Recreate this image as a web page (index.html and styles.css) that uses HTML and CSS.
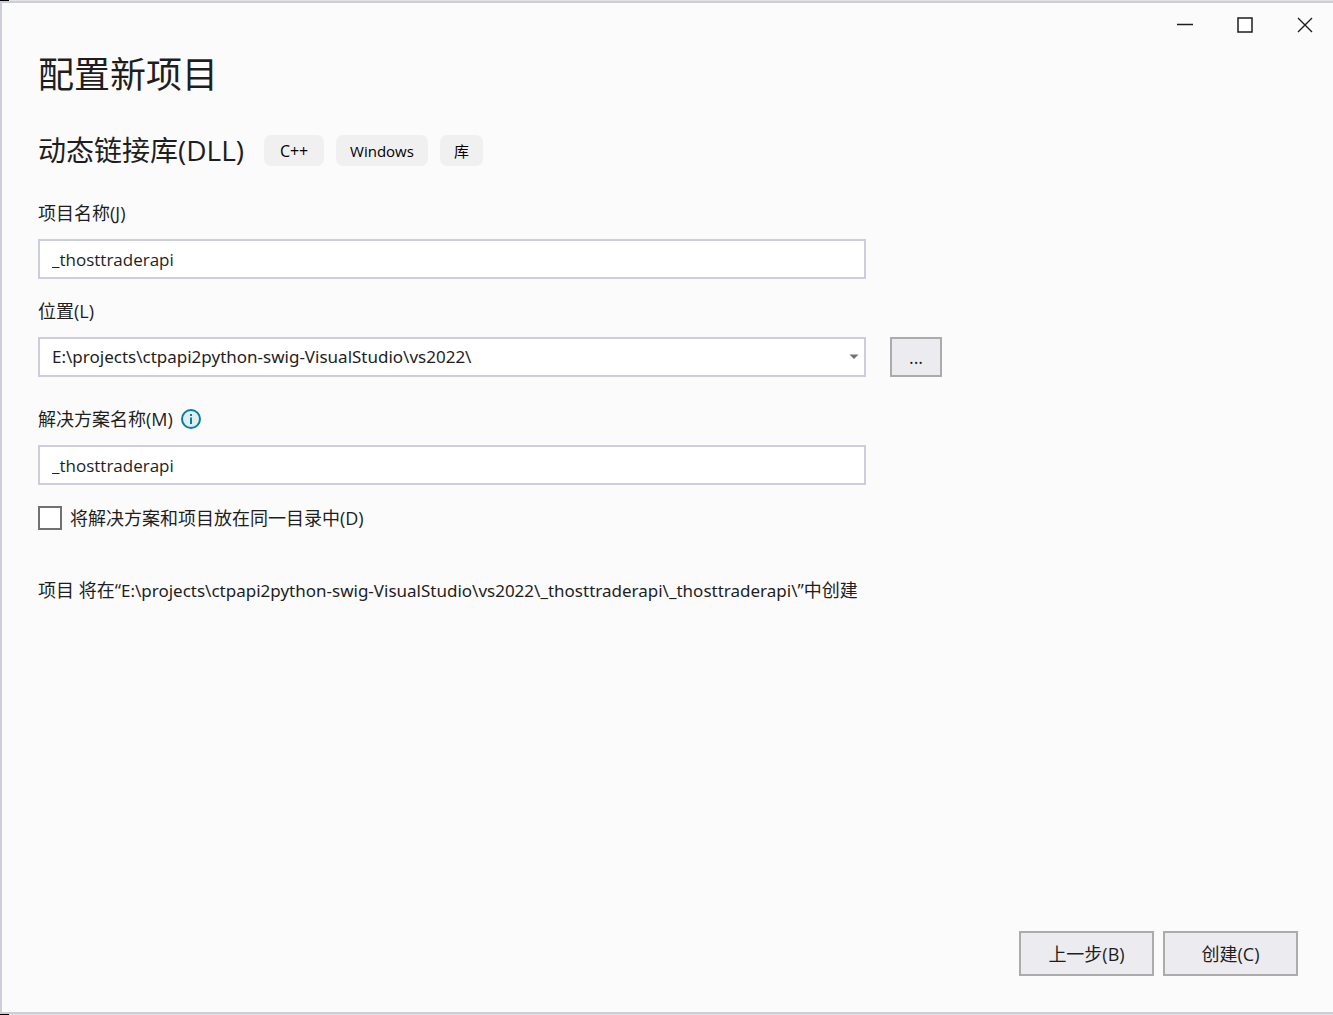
FILE: index.html
```html
<!DOCTYPE html>
<html lang="zh-CN">
<head>
<meta charset="utf-8">
<meta name="viewport" content="width=device-width, initial-scale=1">
<title>配置新项目</title>
<link rel="stylesheet" href="styles.css">
</head>
<body>
<div class="edge"></div>
<div class="window">
  <header class="titlebar">
    <button class="caption" type="button" aria-label="最小化"><svg width="16" height="16" viewBox="0 0 16 16"><path d="M0 7.5H16" stroke="#1e1e1e" stroke-width="1.5"/></svg></button>
    <button class="caption" type="button" aria-label="最大化"><svg width="16" height="16" viewBox="0 0 16 16"><rect x="1" y="1" width="14" height="14" fill="#fff" stroke="#1e1e1e" stroke-width="1.5"/></svg></button>
    <button class="caption" type="button" aria-label="关闭"><svg width="16" height="16" viewBox="0 0 16 16"><path d="M1 1L15 15M15 1L1 15" stroke="#1e1e1e" stroke-width="1.4"/></svg></button>
  </header>
  <main class="content">
    <h1 class="title">配置新项目</h1>
    <div class="template">
      <h2 class="template-name">动态链接库(DLL)</h2>
      <ul class="tags">
        <li class="tag language">C++</li>
        <li class="tag">Windows</li>
        <li class="tag">库</li>
      </ul>
    </div>
    <form class="form" id="project">
      <div class="field">
        <label class="label" for="name">项目名称(J)</label>
        <input class="box" id="name" type="text" value="_thosttraderapi">
      </div>
      <div class="field">
        <label class="label" for="location">位置(L)</label>
        <div class="location">
          <div class="combo">
            <select class="box path" id="location"><option>E:\projects\ctpapi2python-swig-VisualStudio\vs2022\</option></select>
            <svg class="arrow" width="10" height="6" viewBox="0 0 10 6"><path d="M0.5 0.5H9.5L5 5Z" fill="#717171"/></svg>
          </div>
          <button class="button browse" type="button">...</button>
        </div>
      </div>
      <div class="field solution">
        <div class="label-row">
          <label class="label" for="solution">解决方案名称(M)</label>
          <svg width="20" height="20" viewBox="0 0 20 20"><circle cx="10" cy="10" r="9" fill="#e0edf1" stroke="#077ea5" stroke-width="2"/><path d="M9 5h2v2H9zM9 8.5h2V15H9z" fill="#077ea5"/></svg>
        </div>
        <input class="box" id="solution" type="text" value="_thosttraderapi">
      </div>
      <div class="check-row">
        <input class="check" id="same-dir" type="checkbox">
        <label class="label" for="same-dir">将解决方案和项目放在同一目录中(D)</label>
      </div>
      <p class="summary">项目 将在“<span class="path">E:\projects\ctpapi2python-swig-VisualStudio\vs2022\_thosttraderapi\_thosttraderapi\</span>”中创建</p>
    </form>
  </main>
  <footer class="actions">
    <button class="button" type="button">上一步(B)</button>
    <button class="button" type="submit" form="project">创建(C)</button>
  </footer>
</div>
<div class="edge"></div>
</body>
</html>
```
FILE: styles.css
```css
* {
  box-sizing: border-box;
}

body {
  margin: 0;
  min-height: 100vh;
  display: flex;
  flex-direction: column;
  background: #fbfbfb;
  color: #1e1e1e;
  font-family: "Open Sans", "Noto Sans CJK SC", sans-serif;
  font-size: 18px;
  line-height: 24px;
}

button,
input,
select {
  font: inherit;
  color: inherit;
}

h1,
h2,
p,
ul {
  margin: 0;
  padding: 0;
  font-weight: 400;
}

.edge {
  height: 1px;
  background: linear-gradient(to right, #000 9px, #e2e2e2 9px);
}

.window {
  flex: 1;
  display: flex;
  flex-direction: column;
  border: 2px solid #cccedb;
  border-right: 0;
}

.titlebar {
  display: flex;
  justify-content: flex-end;
  gap: 20px;
  padding: 2px 8px 5px;
}

.caption {
  display: grid;
  place-items: center;
  width: 40px;
  height: 40px;
  padding: 0;
  border: 0;
  background: none;
}

.content {
  flex: 1;
  padding: 0 36px;
}

.title {
  font-size: 36px;
  line-height: 50px;
}

.template {
  display: flex;
  align-items: center;
  gap: 20px;
  margin: 30px 0;
}

.template-name {
  font-size: 28px;
  line-height: 40px;
}

.tags {
  display: flex;
  gap: 12px;
  list-style: none;
}

.tag {
  padding: 4px 14px 3px;
  border-radius: 7px;
  background: #f0f0f0;
  color: #000;
  font-size: 15px;
  text-align: center;
}

.language {
  min-width: 60px;
  font-size: 16px;
}

.form {
  display: flex;
  flex-direction: column;
  padding-top: 1px;
}

.field {
  display: flex;
  flex-direction: column;
  gap: 14px;
  margin-bottom: 20px;
  max-width: 828px;
}

.solution {
  margin-top: 10px;
}

.box {
  width: 100%;
  height: 40px;
  padding: 0 12px;
  border: 2px solid #cccedb;
  border-radius: 0;
  appearance: none;
  background: #fff;
  font-size: 17px;
}

.path {
  font-family: "Noto Sans", "Noto Sans CJK SC", sans-serif;
  font-size: 17px;
}

.location {
  display: flex;
  gap: 24px;
  margin-right: -76px;
}

.combo {
  position: relative;
  flex: 1;
}

.arrow {
  position: absolute;
  right: 7px;
  top: 17px;
  pointer-events: none;
}

.label-row,
.check-row {
  display: flex;
  align-items: center;
  gap: 8px;
}

.check-row {
  margin-top: 1px;
}

.check {
  width: 24px;
  height: 24px;
  margin: 0;
  border: 2px solid #717171;
  appearance: none;
  background: #fff;
}

.summary {
  margin-top: 48px;
}

.actions {
  display: flex;
  justify-content: flex-end;
  gap: 9px;
  padding: 36px 35px;
}

.button {
  width: 135px;
  height: 45px;
  padding: 0;
  border: 2px solid #ababab;
  background: #ececf0;
}

.browse {
  width: 52px;
  height: 40px;
}
```
